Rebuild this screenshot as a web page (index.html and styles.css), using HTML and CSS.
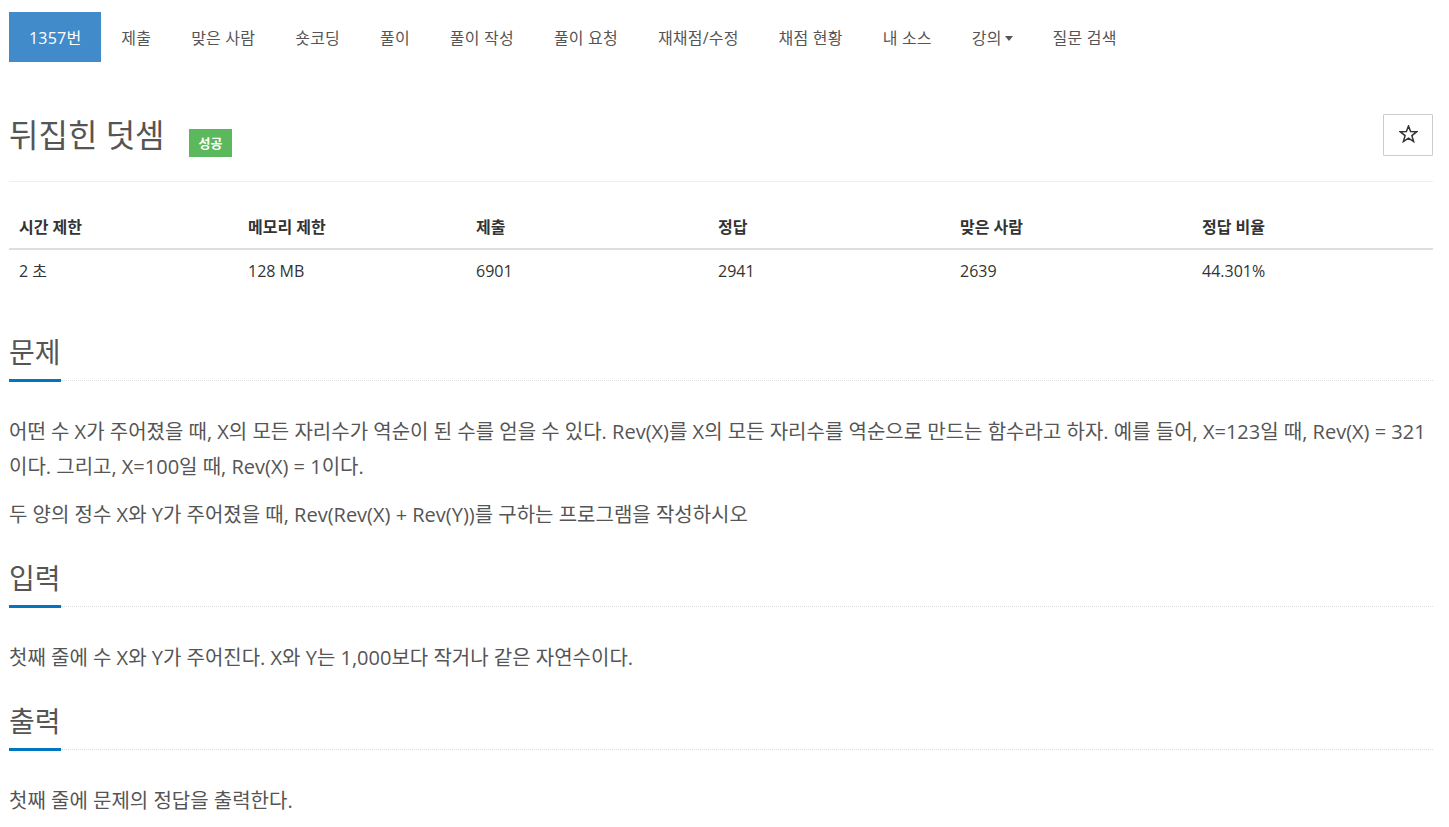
FILE: index.html
```html
<!DOCTYPE html>
<html lang="ko">
<head>
<meta charset="utf-8">
<title>1357번: 뒤집힌 덧셈</title>
<link rel="stylesheet" href="styles.css">
</head>
<body>
<div class="container">
  <ul class="nav">
    <li class="nav-item active"><a href="#">1357번</a></li>
    <li class="nav-item"><a href="#">제출</a></li>
    <li class="nav-item"><a href="#">맞은 사람</a></li>
    <li class="nav-item"><a href="#">숏코딩</a></li>
    <li class="nav-item"><a href="#">풀이</a></li>
    <li class="nav-item"><a href="#">풀이 작성</a></li>
    <li class="nav-item"><a href="#">풀이 요청</a></li>
    <li class="nav-item"><a href="#">재채점/수정</a></li>
    <li class="nav-item"><a href="#">채점 현황</a></li>
    <li class="nav-item"><a href="#">내 소스</a></li>
    <li class="nav-item"><a href="#">강의<span class="caret"></span></a></li>
    <li class="nav-item"><a href="#">질문 검색</a></li>
  </ul>

  <div class="page-header">
    <div class="title-wrap">
      <h1 class="title">뒤집힌 덧셈</h1>
      <span class="badge">성공</span>
    </div>
    <button class="star-btn" type="button" aria-label="즐겨찾기">
      <svg class="star" width="19" height="18" viewBox="0 0 19 18">
        <polygon points="9.5,1 11.6,6.6 17.6,6.8 12.9,10.6 14.6,16.5 9.5,13.1 4.4,16.5 6.1,10.6 1.4,6.8 7.4,6.6" fill="none" stroke="#333" stroke-width="1.5" stroke-linejoin="miter"/>
      </svg>
    </button>
  </div>

  <table class="info">
    <thead>
      <tr>
        <th class="c1">시간 제한</th>
        <th class="c2">메모리 제한</th>
        <th class="c3">제출</th>
        <th class="c4">정답</th>
        <th class="c5">맞은 사람</th>
        <th class="c6">정답 비율</th>
      </tr>
    </thead>
    <tbody>
      <tr>
        <td>2 초</td>
        <td>128 MB</td>
        <td>6901</td>
        <td>2941</td>
        <td>2639</td>
        <td>44.301%</td>
      </tr>
    </tbody>
  </table>

  <section class="section">
    <div class="headline"><h2>문제</h2></div>
    <p>어떤 수 X가 주어졌을 때, X의 모든 자리수가 역순이 된 수를 얻을 수 있다. Rev(X)를 X의 모든 자리수를 역순으로 만드는 함수라고 하자. 예를 들어, X=123일 때, Rev(X) = 321이다. 그리고, X=100일 때, Rev(X) = 1이다.</p>
    <p>두 양의 정수 X와 Y가 주어졌을 때, Rev(Rev(X) + Rev(Y))를 구하는 프로그램을 작성하시오</p>
  </section>

  <section class="section">
    <div class="headline"><h2>입력</h2></div>
    <p>첫째 줄에 수 X와 Y가 주어진다. X와 Y는 1,000보다 작거나 같은 자연수이다.</p>
  </section>

  <section class="section">
    <div class="headline"><h2>출력</h2></div>
    <p>첫째 줄에 문제의 정답을 출력한다.</p>
  </section>
</div>
</body>
</html>
```
FILE: styles.css
```css
* { box-sizing: border-box; }

html, body {
  margin: 0;
  padding: 0;
  background: #fff;
}

body {
  font-family: "Open Sans", "Noto Sans CJK KR", sans-serif;
  color: #555;
  font-size: 16px;
}

.container {
  padding: 12px 16px 0 9px;
}

/* nav */
.nav {
  list-style: none;
  margin: 0;
  padding: 0;
  display: flex;
}

.nav-item a {
  display: flex;
  align-items: center;
  height: 50px;
  padding: 0 20px;
  font-size: 16px;
  letter-spacing: 0.2px;
  color: #555;
  text-decoration: none;
}

.nav-item.active a {
  background: #428bca;
  color: #fff;
}

.caret {
  display: inline-block;
  width: 0;
  height: 0;
  margin-left: 3px;
  margin-top: 2px;
  border-top: 5px solid #555;
  border-left: 4px solid transparent;
  border-right: 4px solid transparent;
}

/* header */
.page-header {
  display: flex;
  justify-content: space-between;
  align-items: center;
  margin-top: 51px;
  padding-bottom: 24px;
  border-bottom: 1px solid #eee;
}

.title-wrap {
  display: flex;
  align-items: center;
}

.title {
  margin: 0;
  font-size: 32px;
  line-height: 42px;
  font-weight: 400;
  color: #555;
}

.badge {
  display: inline-block;
  margin: 16px 0 0 24px;
  height: 28px;
  line-height: 28px;
  padding: 0 10px;
  background: #5cb85c;
  color: #fff;
  font-size: 13px;
  font-weight: 700;
}

.star-btn {
  display: flex;
  align-items: center;
  justify-content: center;
  width: 50px;
  height: 42px;
  border: 1px solid #ccc;
  border-radius: 1px;
  background: #fff;
  padding: 0;
}

.star {
  display: block;
  margin-top: -2px;
}

/* table */
.info {
  width: 100%;
  table-layout: fixed;
  border-collapse: collapse;
  margin: 26px 0 18px;
  color: #333;
}

.info th,
.info td {
  text-align: left;
  padding: 8px 10px;
  line-height: 22px;
  font-size: 16px;
}

.info th {
  font-weight: 700;
  padding-bottom: 10px;
  border-bottom: 2px solid #ddd;
}

.info td {
  padding-top: 10px;
  padding-bottom: 8px;
}

.info .c1 { width: 229px; }
.info .c2 { width: 228px; }
.info .c3 { width: 242px; }
.info .c4 { width: 242px; }
.info .c5 { width: 242px; }

/* sections */
.section {
  padding-top: 29px;
}

.section:first-of-type {
  padding-top: 27px;
}

.headline {
  display: flex;
  align-items: flex-end;
  margin-bottom: 32px;
}

.headline::after {
  content: "";
  flex: 1;
  border-bottom: 1px dotted #ddd;
  margin-bottom: 1px;
}

.headline h2 {
  margin: 0;
  font-size: 28px;
  line-height: 34px;
  font-weight: 400;
  color: #555;
  padding-bottom: 10px;
  border-bottom: 3px solid #0076c0;
}

.section p {
  margin: 0 0 13px;
  font-size: 20px;
  line-height: 35px;
  color: #555;
}

.section p:last-child {
  margin-bottom: 0;
}
```
